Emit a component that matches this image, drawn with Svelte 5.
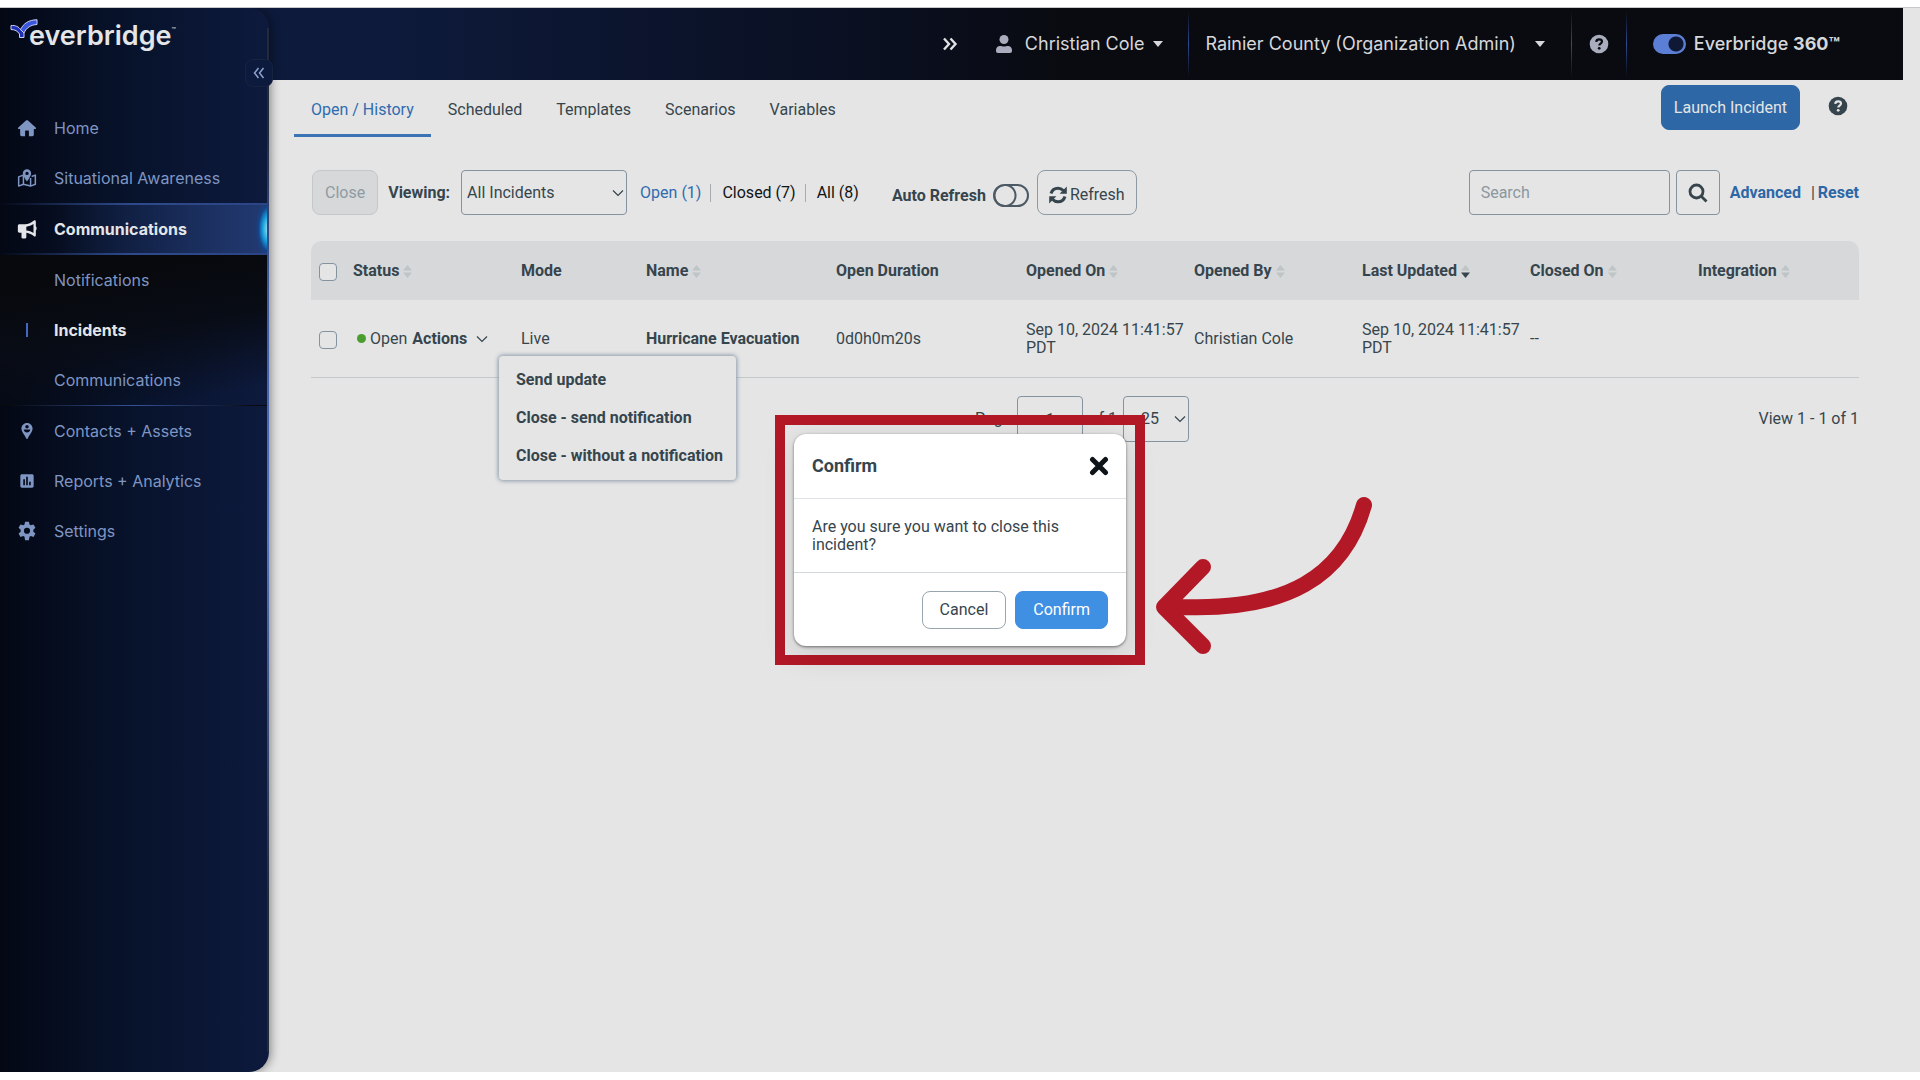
<script lang="ts">
	type NavItem = { label: string; icon: string };
	type Column = { label: string; width: number; sort?: 'none' | 'desc' };

	const topItems: NavItem[] = [
		{ label: 'Home', icon: 'home' },
		{ label: 'Situational Awareness', icon: 'map' }
	];
	const subItems = ['Notifications', 'Incidents', 'Communications'];
	const bottomItems: NavItem[] = [
		{ label: 'Contacts + Assets', icon: 'pin' },
		{ label: 'Reports + Analytics', icon: 'chart' },
		{ label: 'Settings', icon: 'gear' }
	];
	const tabs = ['Open / History', 'Scheduled', 'Templates', 'Scenarios', 'Variables'];
	const filters = ['Open (1)', 'Closed (7)', 'All (8)'];
	const menuItems = ['Send update', 'Close - send notification', 'Close - without a notification'];

	// widths are shares of the whole table
	const columns: Column[] = [
		{ label: 'Status', width: 168, sort: 'none' },
		{ label: 'Mode', width: 125 },
		{ label: 'Name', width: 190, sort: 'none' },
		{ label: 'Open Duration', width: 190 },
		{ label: 'Opened On', width: 168, sort: 'none' },
		{ label: 'Opened By', width: 168, sort: 'none' },
		{ label: 'Last Updated', width: 168, sort: 'desc' },
		{ label: 'Closed On', width: 168, sort: 'none' },
		{ label: 'Integration', width: 166, sort: 'none' }
	];
	const checkWidth = 37;
	const total = columns.reduce((sum, c) => sum + c.width, checkWidth);

	let activeTab = $state('Open / History');
	let activeSub = $state('Incidents');
	let activeFilter = $state('Open (1)');
	let menuOpen = $state(true);
	let confirmOpen = $state(true);
	let autoRefresh = $state(false);
	let suite = $state(true);
</script>

{#snippet icon(name: string)}
	<svg class="icon" viewBox="0 0 24 24" width="20" height="20" aria-hidden="true">
		{#if name === 'home'}
			<path
				d="M12 2.6c.5 0 .9.2 1.2.5l9.2 8.3c.9.8.4 1.9-.6 1.9h-1.6v6.9c0 1-.7 1.7-1.7 1.7h-4.2v-5.6c0-.7-.5-1.2-1.2-1.2h-2.2c-.7 0-1.2.5-1.2 1.2v5.6H5.5c-1 0-1.7-.7-1.7-1.7v-6.9H2.2c-1 0-1.5-1.1-.6-1.9l9.2-8.3c.3-.3.7-.5 1.2-.5z"
			/>
		{:else if name === 'map'}
			<path
				d="M7.5 8.5 2 10.7v11l5.7-2.2 8.6 2.2 5.7-2.2v-11l-4.5 1.7M7.7 8.7v10.8M16.3 12v9.7"
				fill="none"
				stroke="currentColor"
				stroke-width="1.8"
				stroke-linejoin="round"
			/>
			<path
				fill-rule="evenodd"
				d="M12 1.5c2.900 0 5 2.200 5 4.900 0 3.400-5 9.900-5 9.900S7 9.800 7 6.400c0-2.700 2.100-4.900 5-4.900zm0 3a2 2 0 1 0 0 4 2 2 0 0 0 0-4z"
			/>
		{:else if name === 'horn'}
			<path
				fill-rule="evenodd"
				d="M20.300 1.800c1.200-.5 2.300.1 2.300 1.400v5.600c1.300.6 1.300 4.400 0 5v5.700c0 1.300-1.100 1.900-2.300 1.100-2.900-2.200-5.700-3.500-9.100-4v5.400c0 .8-.5 1.300-1.300 1.300H6.700c-.8 0-1.300-.5-1.300-1.300v-5.600H3c-1.200 0-2-.8-2-2V8.300c0-1.200.8-2 2-2h6.500c4 0 7.500-1.800 10.800-4.500zM19.800 6c-2.700 1.800-5.500 2.900-8.600 3.200v4.600c3.100.3 5.900 1.300 8.600 3z"
			/>
		{:else if name === 'pin'}
			<path
				fill-rule="evenodd"
				d="M12 2.500c3.800 0 6.700 3 6.700 6.600 0 4.200-4.200 7.800-5.600 11.600-.4 1-1.800 1-2.200 0-1.400-3.800-5.600-7.400-5.600-11.600 0-3.600 2.900-6.600 6.700-6.600zm0 2.300a2.100 2.100 0 1 0 0 4.200 2.100 2.100 0 0 0 0-4.200zM8 10.300c.4 2.200 2 3.600 4 3.600s3.600-1.400 4-3.600z"
			/>
		{:else if name === 'chart'}
			<path
				fill-rule="evenodd"
				d="M6 4h12c1.200 0 2 .8 2 2v12c0 1.200-.8 2-2 2H6c-1.200 0-2-.8-2-2V6c0-1.200.8-2 2-2zm1.500 6v7h2v-7zm3.500-3v10h2V7zm3.500 6v4h2v-4z"
			/>
		{:else if name === 'gear'}
			<path
				fill-rule="evenodd"
				d="M9.700 1h4.600l.7 3.300 1.600.9 3.200-1.100 2.300 4-2.500 2.300v2.400l2.500 2.300-2.300 4-3.200-1.100-1.600.9-.7 4.100H9.700L9 18.900l-1.600-.9-3.200 1.100-2.300-4 2.500-2.300v-2.400L1.900 8.100l2.300-4 3.200 1.100L9 4.300zM12 8a3.700 3.700 0 1 0 0 7.400A3.700 3.700 0 0 0 12 8z"
			/>
		{/if}
	</svg>
{/snippet}

{#snippet help()}
	<svg viewBox="0 0 20 20" width="20" height="20" aria-hidden="true">
		<circle cx="10" cy="10" r="9.3" fill="currentColor" />
		<path
			d="M7.200 7.800c.2-1.700 1.300-2.500 2.900-2.500 1.700 0 2.900.9 2.900 2.300 0 2-2.700 1.900-2.700 3.900"
			fill="none"
			stroke="var(--cut)"
			stroke-width="2.2"
		/>
		<circle cx="10.2" cy="14.3" r="1.4" fill="var(--cut)" />
	</svg>
{/snippet}

{#snippet chevron()}
	<svg class="chevron" viewBox="0 0 12 8" width="12" height="8" aria-hidden="true">
		<path d="M1 1.500 6 6.500 11 1.500" fill="none" stroke="currentColor" stroke-width="1.2" />
	</svg>
{/snippet}

{#snippet caret()}
	<svg viewBox="0 0 10 6" width="10" height="6" aria-hidden="true">
		<path d="M0 0h10L5 6z" fill="currentColor" />
	</svg>
{/snippet}

<div class="app">
	<header class="topbar">
		<button class="bare" aria-label="More">
			<svg viewBox="0 0 16 14" width="16" height="14" aria-hidden="true">
				<path
					d="m2 1.500 5 5.500-5 5.500M8.500 1.500l5 5.500-5 5.500"
					fill="none"
					stroke="#e0e1e4"
					stroke-width="2.4"
				/>
			</svg>
		</button>
		<button class="bare user">
			<svg viewBox="0 0 16 18" width="16" height="18" aria-hidden="true">
				<circle cx="8" cy="4.5" r="4.5" fill="#a9adbd" />
				<path
					d="M0 15.500C0 12.500 1.500 11 4 11c1.500 0 2.500.6 4 .6s2.500-.6 4-.6c2.500 0 4 1.500 4 4.500V16c0 1.200-.8 2-2 2H2c-1.200 0-2-.8-2-2z"
					fill="#a9adbd"
				/>
			</svg>
			<span>Christian Cole</span>
			{@render caret()}
		</button>
		<button class="bare org">
			<span>Rainier County (Organization Admin)</span>
			{@render caret()}
		</button>
		<button class="bare topbar-help" aria-label="Help">{@render help()}</button>
		<label class="suite">
			<input type="checkbox" class="suite-switch" bind:checked={suite} />
			<span>Everbridge <b>360™</b></span>
		</label>
	</header>

	<aside class="sidebar">
		<a class="logo" href="#home">
			<svg viewBox="0 0 28 20" width="28" height="20" aria-hidden="true">
				<g stroke="#c9d0f5" stroke-linejoin="round">
					<path d="M1 6.500c4.500-.3 7.500 1 10 4.500l3 3v4.500H9.500V15C7.500 12 5 10.500 1 10.500z" fill="#1f30b4" />
					<path d="M10.500 10.500C13.500 4.500 18.500 1 27 .7v4.800c-6 .3-10.500 3-13 8.500z" fill="#3b57dd" />
				</g>
			</svg>
			<span class="wordmark">everbridge</span><span class="tm">™</span>
		</a>
		<button class="collapse" aria-label="Collapse menu">
			<svg viewBox="0 0 12 12" width="12" height="12" aria-hidden="true">
				<path
					d="M5.500 1 1.500 6l4 5M10.500 1l-4 5 4 5"
					fill="none"
					stroke="currentColor"
					stroke-width="1.5"
				/>
			</svg>
		</button>
		<nav>
			{#each topItems as item (item.label)}
				<a class="nav-item" href="#{item.icon}">{@render icon(item.icon)}{item.label}</a>
			{/each}
			<a class="nav-item nav-item--open" href="#communications">
				{@render icon('horn')}Communications
			</a>
			<div class="sub">
				{#each subItems as item (item)}
					<a
						class="nav-item nav-item--sub"
						class:active={item === activeSub}
						href="#{item}"
						onclick={() => (activeSub = item)}
					>
						<span class="mark"></span>{item}
					</a>
				{/each}
			</div>
			{#each bottomItems as item (item.label)}
				<a class="nav-item" href="#{item.icon}">{@render icon(item.icon)}{item.label}</a>
			{/each}
		</nav>
	</aside>

	<main>
		<div class="tabs-row">
			<div class="tabs" role="tablist">
				{#each tabs as tab (tab)}
					<button
						role="tab"
						aria-selected={tab === activeTab}
						class="tab"
						class:active={tab === activeTab}
						onclick={() => (activeTab = tab)}>{tab}</button
					>
				{/each}
			</div>
			<button class="launch">Launch Incident</button>
			<button class="bare page-help" aria-label="Page help">{@render help()}</button>
		</div>

		<div class="toolbar">
			<button class="btn btn--disabled" disabled>Close</button>
			<label class="viewing" for="viewing">Viewing:</label>
			<span class="select select--wide">
				<select id="viewing">
					<option>All Incidents</option>
				</select>
				{@render chevron()}
			</span>
			<div class="filters">
				{#each filters as filter (filter)}
					<a
						href="#{filter}"
						class:active={filter === activeFilter}
						onclick={() => (activeFilter = filter)}>{filter}</a
					>
				{/each}
			</div>
			<label class="auto">
				Auto Refresh
				<input type="checkbox" class="auto-switch" bind:checked={autoRefresh} />
			</label>
			<button class="btn btn--refresh">
				<svg viewBox="0 0 18 18" width="18" height="18" aria-hidden="true">
					<path
						d="M2 7.500C3 4.200 5.600 2.200 9 2.200c2.300 0 4 .9 5.300 2.300M16 10.500c-1 3.300-3.600 5.300-7 5.300-2.300 0-4-.9-5.300-2.300"
						fill="none"
						stroke="currentColor"
						stroke-width="3"
					/>
					<path d="M17.800.5v7.200h-7.200zM.2 17.500v-7.200h7.200z" fill="currentColor" />
				</svg>
				Refresh
			</button>
			<div class="search">
				<input type="text" placeholder="Search" aria-label="Search" />
				<button class="search-btn" aria-label="Run search">
					<svg viewBox="0 0 20 20" width="20" height="20" aria-hidden="true">
						<g fill="none" stroke="currentColor" stroke-width="2.8">
							<circle cx="8.5" cy="8.5" r="6.5" />
							<path d="m13.200 13.200 5.300 5.300" />
						</g>
					</svg>
				</button>
				<a href="#advanced">Advanced</a>
				<span class="reset">|<a href="#reset">Reset</a></span>
			</div>
		</div>

		<table>
			<colgroup>
				<col style="width: {(checkWidth / total) * 100}%" />
				{#each columns as col (col.label)}
					<col style="width: {(col.width / total) * 100}%" />
				{/each}
			</colgroup>
			<thead>
				<tr>
					<th class="check"><input type="checkbox" aria-label="Select all" /></th>
					{#each columns as col (col.label)}
						<th>
							{col.label}
							{#if col.sort}
								<svg class="sort" viewBox="0 0 9 13" width="9" height="13" aria-hidden="true">
									<path d="M0 5.500h9L4.500 0z" fill="#bfc4c7" />
									<path d="M0 7.500h9L4.500 13z" fill={col.sort === 'desc' ? '#36454d' : '#bfc4c7'} />
								</svg>
							{/if}
						</th>
					{/each}
				</tr>
			</thead>
			<tbody>
				<tr>
					<td class="check"><input type="checkbox" aria-label="Select Hurricane Evacuation" /></td>
					<td class="status">
						<div class="status-line">
							<span class="dot"></span>Open
							<button class="bare actions" onclick={() => (menuOpen = !menuOpen)}>
								<b>Actions</b>
								{@render chevron()}
							</button>
						</div>
						{#if menuOpen}
							<div class="menu" role="menu">
								{#each menuItems as item (item)}
									<button role="menuitem">{item}</button>
								{/each}
							</div>
						{/if}
					</td>
					<td>Live</td>
					<td><b>Hurricane Evacuation</b></td>
					<td>0d0h0m20s</td>
					<td>Sep 10, 2024 11:41:57 PDT</td>
					<td>Christian Cole</td>
					<td>Sep 10, 2024 11:41:57 PDT</td>
					<td>--</td>
					<td></td>
				</tr>
			</tbody>
		</table>

		<div class="pager">
			<div class="pager-mid">
				<label for="page">Page</label>
				<input id="page" type="text" value="1" />
				<span>of 1</span>
				<span class="select">
					<select aria-label="Rows per page">
						<option>25</option>
					</select>
					{@render chevron()}
				</span>
			</div>
			<span class="count">View 1 - 1 of 1</span>
		</div>
	</main>
</div>

{#if confirmOpen}
	<div class="frame">
		<div class="modal" role="dialog" aria-labelledby="confirm-title">
			<div class="modal-head">
				<h2 id="confirm-title">Confirm</h2>
				<button class="bare" aria-label="Close dialog" onclick={() => (confirmOpen = false)}>
					<svg viewBox="0 0 20 20" width="20" height="20" aria-hidden="true">
						<path
							d="m3.500 3.500 13 13M16.500 3.500l-13 13"
							stroke="#0f1418"
							stroke-width="5"
							stroke-linecap="round"
						/>
					</svg>
				</button>
			</div>
			<p>Are you sure you want to close this incident?</p>
			<div class="modal-foot">
				<button onclick={() => (confirmOpen = false)}>Cancel</button>
				<button class="primary" onclick={() => (confirmOpen = false)}>Confirm</button>
			</div>
		</div>
		<svg class="arrow" viewBox="0 0 220 164" width="220" height="164" aria-hidden="true">
			<path
				d="M209 10C190 78 136 120 10 111M48 72 9 112l39 39"
				fill="none"
				stroke="#b31827"
				stroke-width="16"
				stroke-linecap="round"
				stroke-linejoin="round"
			/>
		</svg>
	</div>
{/if}

<style>
	:global(body) {
		background: #fff;
	}
	.app,
	.frame {
		font-family: Roboto, 'Liberation Sans', sans-serif;
		font-size: 16px;
		line-height: 18px;
		color: #36454d;
	}
	.app {
		display: grid;
		grid-template-columns: 269px minmax(0, 1fr);
		grid-template-rows: 72px 1fr;
		min-height: calc(100vh - 16px);
		margin: 8px 0;
		overflow: clip;
		background: #e5e5e5;
		box-shadow: 0 -1px #c8c8cc;
	}
	button,
	input,
	select {
		box-sizing: border-box;
		margin: 0;
		font: inherit;
		color: inherit;
	}
	button {
		cursor: pointer;
	}
	a {
		text-decoration: none;
	}
	b,
	th {
		font-weight: 700;
	}
	.bare {
		display: flex;
		align-items: center;
		padding: 0;
		border: 0;
		background: none;
	}

	/* top bar runs behind the sidebar's rounded corner */
	.topbar {
		grid-area: 1 / 1 / 2 / 3;
		display: flex;
		align-items: stretch;
		justify-content: flex-end;
		margin-right: 17px;
		padding-right: 63px;
		background: linear-gradient(90deg, #0d1a3b 20%, #0a0f1f 47%, #090b10 56%);
		font-family: Inter, 'Liberation Sans', sans-serif;
		font-size: 18px;
		color: #d6d7da;
	}
	.user {
		gap: 9px;
		padding: 0 25px 0 38px;
	}
	.user span {
		margin-left: 4px;
	}
	.org,
	.topbar-help,
	.suite {
		border-left: 1px solid;
		border-image: linear-gradient(transparent 5%, #2f4a94 50%, transparent 95%) 1;
	}
	.org {
		gap: 19px;
		padding: 0 26px 0 16px;
	}
	.topbar-help {
		--cut: #0a0c11;
		padding: 0 17px;
		color: #a9adbd;
	}
	.suite {
		display: flex;
		align-items: center;
		gap: 8px;
		padding-left: 26px;
		font-weight: 500;
	}
	.suite-switch {
		appearance: none;
		width: 33px;
		height: 20px;
		border-radius: 10px;
		background: radial-gradient(circle at 23px 10px, #0f1834 7px, #5b7fd4 8px);
	}

	.sidebar {
		grid-area: 1 / 1 / 3 / 2;
		position: relative;
		z-index: 1;
		border-radius: 0 20px 20px 0;
		background: linear-gradient(90deg, #040815, #07122a 45%, #0d1a3d);
		box-shadow: 2px 0 10px rgb(0 0 0 / 0.4);
		font-family: Inter, 'Liberation Sans', sans-serif;
		color: #7f95c2;
	}
	.sidebar::after {
		content: '';
		position: absolute;
		inset: 20px 0 20px auto;
		width: 2px;
		background: linear-gradient(#232a38 10%, #3d5a9f 25%, #5272bd 50%, #232a38 85%);
	}
	.logo {
		display: flex;
		align-items: flex-start;
		height: 95px;
		padding-left: 10px;
		box-sizing: border-box;
		color: #e4e5e8;
	}
	.logo svg {
		margin-top: 11px;
	}
	.wordmark {
		margin: 10px 0 0 -9px;
		font-size: 27px;
		font-weight: 600;
		line-height: 36px;
	}
	.tm {
		margin-top: 14px;
		font-size: 7px;
	}
	.collapse {
		position: absolute;
		z-index: 1;
		top: 51px;
		right: -4px;
		display: grid;
		place-items: center;
		width: 28px;
		height: 28px;
		padding: 0;
		border: 1px solid #172440;
		border-radius: 8px;
		background: #0c1a3e;
		color: #8fa3cf;
	}
	.nav-item {
		display: flex;
		align-items: center;
		gap: 17px;
		height: 50px;
		padding-left: 17px;
		color: inherit;
	}
	.icon {
		fill: currentColor;
	}
	.nav-item--open {
		height: 48px;
		border-top: 2px solid;
		border-bottom: 2px solid;
		border-image: linear-gradient(90deg, transparent, #2f4a8c 50%, #2b4484) 1;
		background:
			radial-gradient(ellipse 14px 30px at 269px 50%, #b5f0f0, #16a0e0 45%, #0a4d9c80 75%, transparent),
			linear-gradient(90deg, transparent 20%, #223a72);
		color: #e4e5e8;
		font-weight: 700;
	}
	.sub {
		border-bottom: 1px solid;
		border-image: linear-gradient(90deg, transparent 3%, #35529a 50%, transparent 95%) 1;
		background: linear-gradient(170deg, #07090d 20%, #080c15 50%, transparent 90%);
	}
	.mark {
		width: 2px;
		height: 14px;
		margin: 0 9px;
	}
	.active .mark {
		background: #4666c4;
	}
	.nav-item--sub.active {
		color: #e4e5e8;
		font-weight: 700;
	}

	main {
		grid-area: 2 / 2 / 3 / 3;
		padding: 0 61px 0 42px;
	}
	.tabs-row {
		display: flex;
		align-items: flex-start;
		margin-left: -17px;
	}
	.tabs {
		display: flex;
		flex: 1;
	}
	.tab {
		height: 57px;
		padding: 5px 17px 0;
		border: 0;
		border-bottom: 3px solid transparent;
		background: none;
	}
	.tab.active {
		border-color: #3a74b5;
		color: #2f6cb0;
	}
	.launch {
		height: 45px;
		margin: 5px 28px 0 0;
		padding: 0 12px;
		border: 1px solid #2d67a5;
		border-radius: 8px;
		background: #2d67a5;
		color: #e5e5e5;
	}
	.page-help {
		--cut: #e5e5e5;
		margin: 16px 11px 0 0;
	}

	.toolbar {
		display: flex;
		align-items: center;
		margin-top: 33px;
	}
	.btn {
		display: flex;
		align-items: center;
		gap: 3px;
		height: 45px;
		padding: 0 12px;
		border: 1px solid #8d9aa3;
		border-radius: 8px;
		background: none;
	}
	.btn--refresh {
		padding: 4px 11px 0;
	}
	.btn--disabled {
		margin-left: 1px;
		border-color: #c3c8cb;
		background: #d6d8da;
		color: #8f9ba2;
	}
	.viewing {
		margin: 0 11px 0 10px;
		font-weight: 700;
	}
	.select {
		display: grid;
		align-items: center;
		width: 66px;
	}
	.select > * {
		grid-area: 1 / 1;
	}
	.select .chevron {
		justify-self: end;
		margin-right: 3px;
		pointer-events: none;
	}
	.select select {
		width: 100%;
		height: 46px;
		padding: 0 17px;
		appearance: none;
		border: 1px solid #8493a0;
		border-radius: 4px;
		background: none;
	}
	.select--wide {
		width: 166px;
	}
	.select--wide select {
		height: 45px;
		padding: 0 5px;
	}
	.filters {
		display: flex;
		margin-left: 13px;
	}
	.filters a {
		color: #101416;
	}
	.filters a.active {
		color: #2f6cb0;
	}
	.filters a + a {
		margin-left: 9px;
		padding-left: 11px;
		border-left: 1px solid #a4adb3;
	}
	.auto {
		display: flex;
		align-items: center;
		gap: 7px;
		margin: 0 8px 0 33px;
		padding-top: 6px;
		font-weight: 700;
	}
	.auto-switch {
		appearance: none;
		width: 36px;
		height: 23px;
		border: 2px solid #4b5a64;
		border-radius: 12px;
		background: radial-gradient(circle at 10px 50%, #e5e5e5 9px, #4b5a64 10px, #4b5a64 11px, transparent 12px);
	}
	.search {
		display: flex;
		align-items: center;
		margin-left: auto;
		font-weight: 700;
	}
	.search a {
		color: #2d67a5;
	}
	.search input {
		width: 201px;
		height: 45px;
		padding: 0 11px;
		border: 1px solid #8493a0;
		border-radius: 4px;
		background: none;
		font-weight: 400;
	}
	.search input::placeholder {
		color: #8b979f;
		opacity: 1;
	}
	.search-btn {
		display: grid;
		place-items: center;
		width: 44px;
		height: 45px;
		margin: 0 10px 0 6px;
		padding: 0;
		border: 1px solid #8493a0;
		border-radius: 4px;
		background: none;
	}
	.reset {
		display: flex;
		gap: 3px;
		margin-left: 10px;
		font-weight: 400;
	}
	.reset a {
		font-weight: 700;
	}

	table {
		width: 100%;
		margin-top: 26px;
		border-spacing: 0;
		table-layout: fixed;
	}
	th,
	td {
		box-sizing: border-box;
		padding: 0 5px;
		text-align: left;
	}
	th {
		height: 59px;
		background: #d6d8da;
	}
	th:first-child {
		border-top-left-radius: 10px;
	}
	th:last-child {
		border-top-right-radius: 10px;
	}
	td {
		height: 78px;
		border-bottom: 1px solid #c3c8cb;
	}
	.sort {
		vertical-align: -2px;
	}
	.check {
		padding: 2px 8px 0;
	}
	.check input {
		display: block;
		appearance: none;
		width: 18px;
		height: 18px;
		border: 1px solid #8493a0;
		border-radius: 4px;
		background: #e5e5e5;
	}
	.status {
		position: relative;
	}
	.status-line {
		display: flex;
		align-items: center;
		padding-left: 4px;
	}
	.dot {
		width: 9px;
		height: 9px;
		margin-right: 4px;
		border-radius: 50%;
		background: #4a9e2f;
	}
	.actions {
		gap: 9px;
		margin-left: 5px;
	}
	.menu {
		position: absolute;
		z-index: 1;
		top: 56px;
		left: 151px;
		display: flex;
		flex-direction: column;
		padding: 5px 0;
		border-radius: 4px;
		background: #e5e5e5;
		box-shadow: 0 0 4px 1px #8a98a8;
	}
	.menu button {
		height: 38px;
		padding: 0 13px 0 17px;
		border: 0;
		background: none;
		font-weight: 700;
		text-align: left;
		white-space: nowrap;
	}

	.pager {
		display: grid;
		grid-template-columns: 1fr auto 1fr;
		align-items: center;
		margin-top: 18px;
	}
	.pager-mid {
		grid-column: 2;
		display: flex;
		align-items: center;
		gap: 6px;
		margin-right: 6px;
	}
	.pager-mid input {
		width: 66px;
		height: 46px;
		border: 1px solid #8493a0;
		border-radius: 4px;
		background: none;
		text-align: center;
	}
	.count {
		justify-self: end;
	}

	/* highlighted confirmation, floating over the page */
	.frame {
		position: absolute;
		top: 415px;
		left: 50%;
		box-sizing: border-box;
		width: 370px;
		padding: 9px;
		border: 10px solid #b31827;
		transform: translateX(-50%);
	}
	.modal {
		border-radius: 12px;
		background: #fff;
		box-shadow: 0 1px 3px rgb(0 0 0 / 0.5), 0 8px 32px rgb(0 0 0 / 0.12);
	}
	.modal-head {
		display: flex;
		align-items: center;
		justify-content: space-between;
		height: 64px;
		padding: 0 17px 0 18px;
		border-bottom: 1px solid #dde3e6;
	}
	h2 {
		margin: 0;
		font-size: 18px;
		font-weight: 700;
	}
	.modal p {
		margin: 0;
		padding: 19px 18px 18px;
		border-bottom: 1px solid #d3d9dc;
	}
	.modal-foot {
		display: flex;
		justify-content: flex-end;
		gap: 9px;
		padding: 18px 18px 17px;
	}
	.modal-foot button {
		height: 38px;
		padding: 0 17px;
		border: 1px solid #9aa6ae;
		border-radius: 8px;
		background: #fff;
	}
	.modal-foot .primary {
		border-color: #3f8fe2;
		background: #3f8fe2;
		color: #fff;
	}
	.arrow {
		position: absolute;
		top: 70px;
		left: 370px;
	}
</style>
